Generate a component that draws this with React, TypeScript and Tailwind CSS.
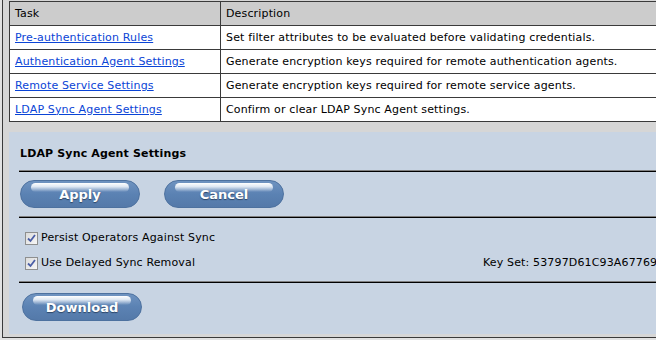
import React from "react";

const tasks = [
  {
    name: "Pre-authentication Rules",
    description: "Set filter attributes to be evaluated before validating credentials.",
  },
  {
    name: "Authentication Agent Settings",
    description: "Generate encryption keys required for remote authentication agents.",
  },
  {
    name: "Remote Service Settings",
    description: "Generate encryption keys required for remote service agents.",
  },
  {
    name: "LDAP Sync Agent Settings",
    description: "Confirm or clear LDAP Sync Agent settings.",
  },
];

function PillButton({ label }: { label: string }) {
  return (
    <button className="relative w-[120px] h-[28px] rounded-full border border-[#4d719f] bg-[linear-gradient(to_bottom,#6f93c0_0%,#5b82b3_50%,#5479a9_100%)] text-white font-bold text-[13px] tracking-normal [text-shadow:0_1px_1px_#2c4566]">
      <span className="absolute left-[10px] right-[10px] top-[2px] h-[9px] rounded-full bg-[linear-gradient(to_bottom,#ffffff_0%,#dfe8f3_40%,rgba(150,180,215,0)_100%)]" />
      <span className="relative top-[1px]">{label}</span>
    </button>
  );
}

function Check({ label }: { label: string }) {
  return (
    <div className="flex items-center h-[16px]">
      <span className="w-[13px] h-[13px] border border-[#8e8f8f] bg-[linear-gradient(135deg,#dcdcdc,#f6f6f6)] flex items-center justify-center">
        <svg width="9" height="9" viewBox="0 0 9 9">
          <path d="M1 4.5 L3.5 7 L8 1" fill="none" stroke="#4a5ea6" strokeWidth="1.8" />
        </svg>
      </span>
      <span className="ml-[3px]">{label}</span>
    </div>
  );
}

function Rule() {
  return <div className="h-0 border-t border-t-[#808080] border-b border-b-black" />;
}

export default function App() {
  return (
    <div className="w-[656px] h-[340px] overflow-hidden bg-[#e2e2e2] text-[11px] tracking-[0.15px] text-black font-['DejaVu_Sans',sans-serif]">
      <div className="ml-[2px] h-[338px] w-[720px] border-l border-b border-[#3a3a3a] bg-[#d6d6d6] pl-[6px] pt-[1px]">
        <div className="w-[700px] border-t border-l border-[#3a3a3a]">
          <div className="flex h-[24px] border-b border-[#3a3a3a] bg-[#cccccc]">
            <div className="w-[211px] border-r border-[#3a3a3a] px-[5px] pt-[1px] flex items-center">Task</div>
            <div className="flex-1 px-[5px] pt-[1px] flex items-center">Description</div>
          </div>
          {tasks.map((task, index) => (
            <div key={index} className="flex h-[24px] border-b border-[#3a3a3a] bg-white">
              <div className="w-[211px] border-r border-[#3a3a3a] px-[5px] pt-[1px] flex items-center">
                <a href="#" className="text-[#0a44d6] underline">{task.name}</a>
              </div>
              <div className="flex-1 px-[5px] pt-[1px] flex items-center whitespace-nowrap">{task.description}</div>
            </div>
          ))}
        </div>

        <div className="mt-[10px] w-[700px] bg-[#c8d4e3] pt-[14px] pb-[13px] pl-[10px]">
          <div className="pl-[1px] h-[16px] flex items-center font-bold">LDAP Sync Agent Settings</div>
          <div className="mt-[8px]"><Rule /></div>
          <div className="mt-[8px] pl-[1px] flex gap-[24px]">
            <PillButton label="Apply" />
            <PillButton label="Cancel" />
          </div>
          <div className="mt-[8px]"><Rule /></div>
          <div className="mt-[12px] pl-[6px] flex flex-col gap-[9px]">
            <Check label="Persist Operators Against Sync" />
            <div className="flex items-center">
              <div className="w-[458px]"><Check label="Use Delayed Sync Removal" /></div>
              <span className="whitespace-nowrap">Key Set: 53797D61C93A67769</span>
            </div>
          </div>
          <div className="mt-[9px]"><Rule /></div>
          <div className="mt-[10px] pl-[3px]">
            <PillButton label="Download" />
          </div>
        </div>
      </div>
    </div>
  );
}
